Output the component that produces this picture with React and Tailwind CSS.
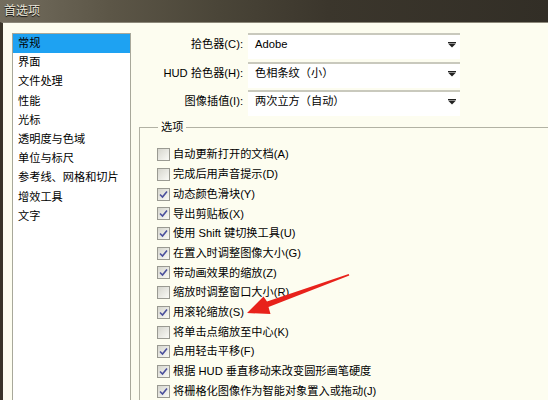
import { useState } from 'react'

const categories = [
  '常规',
  '界面',
  '文件处理',
  '性能',
  '光标',
  '透明度与色域',
  '单位与标尺',
  '参考线、网格和切片',
  '增效工具',
  '文字',
]

const pickers = [
  { label: '拾色器(C):', value: 'Adobe' },
  { label: 'HUD 拾色器(H):', value: '色相条纹（小）' },
  { label: '图像插值(I):', value: '两次立方（自动）' },
]

const options = [
  { text: '自动更新打开的文档(A)', on: false },
  { text: '完成后用声音提示(D)', on: false },
  { text: '动态颜色滑块(Y)', on: true },
  { text: '导出剪贴板(X)', on: true },
  { text: '使用 Shift 键切换工具(U)', on: true },
  { text: '在置入时调整图像大小(G)', on: true },
  { text: '带动画效果的缩放(Z)', on: true },
  { text: '缩放时调整窗口大小(R)', on: false },
  { text: '用滚轮缩放(S)', on: true },
  { text: '将单击点缩放至中心(K)', on: false },
  { text: '启用轻击平移(F)', on: true },
  { text: '根据 HUD 垂直移动来改变圆形画笔硬度', on: true },
  { text: '将栅格化图像作为智能对象置入或拖动(J)', on: true },
]

function Checkbox({ on }) {
  return (
    <div className="w-[13px] h-[13px] shrink-0 border border-[#9a9a92] bg-gradient-to-br from-[#d6d6ce] to-[#fafaf6] flex items-center justify-center">
      {on && (
        <svg width="9" height="9" viewBox="0 0 9 9">
          <path d="M1 4.5 L3.5 7 L8 1.5" fill="none" stroke="#4a4f9c" strokeWidth="1.6" />
        </svg>
      )}
    </div>
  )
}

function Dropdown({ value }) {
  return (
    <div className="w-[212px] h-[26px] border-t-2 border-[#c9c9bd] bg-white flex items-start justify-between pt-[2px] pl-[7px] pr-[4px]">
      <span className="leading-[14px]">{value}</span>
      <svg width="8" height="6" viewBox="0 0 8 6" className="mt-[5px]">
        <rect x="0" y="0" width="8" height="1" fill="#222" />
        <path d="M0 1.5 H8 L4 5.5 Z" fill="#222" />
      </svg>
    </div>
  )
}

export default function App() {
  const [selected, setSelected] = useState(0)
  const [checks, setChecks] = useState(options.map(o => o.on))

  return (
    <div
      className="relative w-[548px] h-[400px] overflow-hidden bg-[#fdfdf0] text-[11.2px] text-black"
      style={{ fontFamily: '"Liberation Sans", "Noto Sans CJK SC", sans-serif' }}
    >
      <div className="h-[22px] bg-[linear-gradient(90deg,#736d5e_0%,#5c5647_20%,#4a4538_40%,#3b362c_60%,#322e26_100%)] flex items-center pl-[4px] text-[12px] text-[#ece8dc] [text-shadow:0_1px_1px_#000]">
        首选项
      </div>
      <div className="flex h-[378px] border-t border-[#8c887a] border-l-[3px] border-l-[#3a3428]">
        <div className="pl-[9px] pt-[10px]">
          <div className="w-[119px] h-[380px] border border-[#a8a89a] bg-white">
            {categories.map((c, i) => (
              <div
                key={c}
                onClick={() => setSelected(i)}
                className={
                  'h-[19.2px] leading-[19px] pl-[5px] cursor-default ' +
                  (i === selected ? 'bg-[#1ea2f2]' : '')
                }
              >
                {c}
              </div>
            ))}
          </div>
        </div>

        <div className="flex-1 pl-[8px] pt-[10px]">
          <div className="flex flex-col gap-[2.5px]">
            {pickers.map(p => (
              <div key={p.label} className="flex h-[26px]">
                <div className="w-[104px] text-right pt-[4px] leading-[14px]">{p.label}</div>
                <div className="ml-[5px]">
                  <Dropdown value={p.value} />
                </div>
              </div>
            ))}
          </div>

          <fieldset className="mt-[4px] border-t border-l border-[#b2b2a4] h-[300px] pl-[17px] pt-[11px]">
            <legend className="ml-[1px] px-[3px] leading-[14px]">选项</legend>
            {options.map((o, i) => (
              <div
                key={o.text}
                className="flex items-center gap-[3px] h-[19.7px]"
                onClick={() => setChecks(checks.map((c, j) => (j === i ? !c : c)))}
              >
                <Checkbox on={checks[i]} />
                <span className="whitespace-nowrap">{o.text}</span>
              </div>
            ))}
          </fieldset>
        </div>
      </div>

      <svg className="absolute left-0 top-0 pointer-events-none" width="548" height="400">
        <polygon
          points="349.3,275.6 348.7,273.9 267,301.5 263.5,296.5 247,313 270.5,314 268.5,307"
          fill="#e8221b"
        />
      </svg>
    </div>
  )
}
